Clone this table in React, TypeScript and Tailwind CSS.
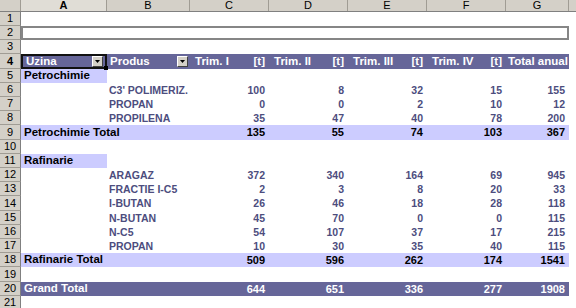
import React from "react";

const FONT = { fontFamily: '"Liberation Sans", Arial, sans-serif' };

const COLS = ["A", "B", "C", "D", "E", "F", "G"];
const CW = ["w-[86px]", "w-[83px]", "w-[79px]", "w-[79px]", "w-[79px]", "w-[79px]", "w-[63px]"];

type Row =
  | { k: "blank" }
  | { k: "box" }
  | { k: "header" }
  | { k: "group"; label: string }
  | { k: "item"; label: string; v: number[] }
  | { k: "total"; label: string; v: number[] }
  | { k: "grand"; label: string; v: number[] };

const ROWS: Row[] = [
  { k: "blank" },
  { k: "box" },
  { k: "blank" },
  { k: "header" },
  { k: "group", label: "Petrochimie" },
  { k: "item", label: "C3' POLIMERIZ.", v: [100, 8, 32, 15, 155] },
  { k: "item", label: "PROPAN", v: [0, 0, 2, 10, 12] },
  { k: "item", label: "PROPILENA", v: [35, 47, 40, 78, 200] },
  { k: "total", label: "Petrochimie Total", v: [135, 55, 74, 103, 367] },
  { k: "blank" },
  { k: "group", label: "Rafinarie" },
  { k: "item", label: "ARAGAZ", v: [372, 340, 164, 69, 945] },
  { k: "item", label: "FRACTIE I-C5", v: [2, 3, 8, 20, 33] },
  { k: "item", label: "I-BUTAN", v: [26, 46, 18, 28, 118] },
  { k: "item", label: "N-BUTAN", v: [45, 70, 0, 0, 115] },
  { k: "item", label: "N-C5", v: [54, 107, 37, 17, 215] },
  { k: "item", label: "PROPAN", v: [10, 30, 35, 40, 115] },
  { k: "total", label: "Rafinarie Total", v: [509, 596, 262, 174, 1541] },
  { k: "blank" },
  { k: "grand", label: "Grand Total", v: [644, 651, 336, 277, 1908] },
  { k: "blank" },
];

const H15 = new Set([3, 8, 13, 18]);

function DropBtn() {
  return (
    <div className="w-[11px] h-[11px] shrink-0 bg-[#d4d0c8] border border-t-white border-l-white border-b-[#404040] border-r-[#404040] flex items-center justify-center">
      <svg width="5" height="3" viewBox="0 0 5 3">
        <polygon points="0,0 5,0 2.5,3" fill="#000" />
      </svg>
    </div>
  );
}

function RowHead({ n, bold }: { n: number; bold?: boolean }) {
  return (
    <div
      className={
        "w-[21px] shrink-0 h-full bg-[#d4d0c8] border-r border-b border-r-[#808080] border-b-[#a09c94] flex items-center justify-center text-[11px] leading-none text-black " +
        (bold ? "font-bold" : "")
      }
    >
      {n}
    </div>
  );
}

function Cells({ row }: { row: Row }) {
  if (row.k === "blank") return <div className="flex-1" />;
  if (row.k === "box")
    return (
      <div className="flex h-full">
        <div className="w-[548px] h-full border-2 border-[#868686] bg-white" />
      </div>
    );
  if (row.k === "header") {
    const titles = ["Trim. I", "Trim. II", "Trim. III", "Trim. IV"];
    return (
      <div className="flex h-full text-white font-bold text-[11.5px] leading-none">
        <div className={CW[0] + " relative h-full bg-[#666699] flex items-center justify-between pl-[3px] pr-[2px] border-2 border-[#111]"}>
          <span>Uzina</span>
          <DropBtn />
          <div className="absolute right-[-3px] bottom-[-3px] w-[4px] h-[4px] bg-black" />
        </div>
        <div className={CW[1] + " h-full bg-[#666699] flex items-center justify-between pl-[3px] pr-[2px]"}>
          <span>Produs</span>
          <DropBtn />
        </div>
        {titles.map((t, i) => (
          <div key={t} className={CW[2 + i] + " h-full bg-[#666699] flex items-center justify-between pl-[5px] pr-[4px]"}>
            <span>{t}</span>
            <span>[t]</span>
          </div>
        ))}
        <div className={CW[6] + " h-full bg-[#666699] flex items-center pl-[2px] whitespace-nowrap"}>Total anual</div>
      </div>
    );
  }
  if (row.k === "group")
    return (
      <div className="flex h-full">
        <div className={CW[0] + " h-full bg-[#ccccff] flex items-center pl-[3px] text-[11.5px] font-bold text-black leading-none"}>
          {row.label}
        </div>
      </div>
    );
  if (row.k === "item")
    return (
      <div className="flex h-full text-[#4d4d7e] font-bold text-[10.5px] leading-none">
        <div className={CW[0] + " h-full"} />
        <div className={CW[1] + " h-full flex items-center pl-[2px] whitespace-nowrap"}>{row.label}</div>
        {row.v.map((v, i) => (
          <div key={i} className={CW[2 + i] + " h-full flex items-center justify-end pr-[4px]"}>
            {v}
          </div>
        ))}
      </div>
    );
  const isGrand = row.k === "grand";
  const bg = isGrand ? "bg-[#666699] text-white" : "bg-[#ccccff] text-black";
  return (
    <div className="flex h-full">
      <div className={"w-[548px] flex h-full font-bold leading-none " + bg}>
        <div className="w-[169px] h-full flex items-center pl-[3px] text-[11.5px] whitespace-nowrap">{row.label}</div>
        {row.v.map((v, i) => (
          <div key={i} className={CW[2 + i] + " h-full flex items-center justify-end pr-[4px] text-[11px]"}>
            {v}
          </div>
        ))}
      </div>
    </div>
  );
}

export default function App() {
  return (
    <div className="w-[576px] h-[308px] overflow-hidden bg-white" style={FONT}>
      <div className="flex h-[12px] bg-[#d4d0c8] border-b border-[#808080] text-[11px] leading-none text-black">
        <div className="w-[21px] shrink-0 h-full border-r border-[#a09c94]" />
        {COLS.map((c, i) => (
          <div
            key={c}
            className={
              CW[i] +
              " shrink-0 h-full border-r border-[#a09c94] flex items-center justify-center " +
              (i === 0 ? "font-bold bg-[#e0ddd6]" : "")
            }
          >
            {c}
          </div>
        ))}
        <div className="flex-1 h-full" />
      </div>
      {ROWS.map((r, i) => (
        <div key={i} className={"flex " + (H15.has(i) ? "h-[15px]" : "h-[14px]")}>
          <RowHead n={i + 1} bold={i === 3} />
          <div className="flex-1 h-full">
            <Cells row={r} />
          </div>
        </div>
      ))}
    </div>
  );
}
